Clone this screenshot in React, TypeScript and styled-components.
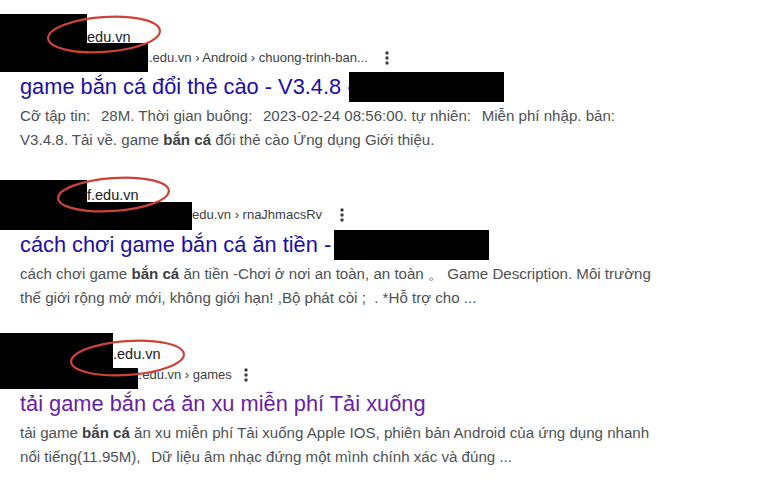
import React from "react";
import styled, { createGlobalStyle } from "styled-components";

const Global = createGlobalStyle`
  html, body { margin: 0; padding: 0; background: #ffffff; }
  body { font-family: "Liberation Sans", Arial, sans-serif; }
`;

const Page = styled.main`
  width: 768px;
  height: 483px;
  overflow: hidden;
  padding-top: 14px;
  box-sizing: border-box;
  background: #fff;
`;

const Result = styled.section<{ $top: number }>`
  position: relative;
  margin-top: ${(p) => p.$top}px;
`;

const SiteRow = styled.div`
  display: flex;
  align-items: flex-end;
`;

const Redact = styled.div<{ $w: number; $h: number; $ml?: number }>`
  width: ${(p) => p.$w}px;
  height: ${(p) => p.$h}px;
  margin-left: ${(p) => p.$ml ?? 0}px;
  background: #000;
  flex-shrink: 0;
  position: relative;
  z-index: 1;
`;

const Domain = styled.span<{ $lift: number }>`
  font-size: 14.5px;
  line-height: 16px;
  color: #202124;
  margin-bottom: ${(p) => p.$lift}px;
  white-space: nowrap;
`;

const CrumbRow = styled.div`
  display: flex;
  align-items: center;
`;

const Crumb = styled.span<{ $up: number; $indent: number }>`
  font-size: 13px;
  line-height: 16px;
  color: #3c4043;
  white-space: nowrap;
  margin-left: ${(p) => p.$indent}px;
  margin-top: ${(p) => -p.$up}px;
`;

const DotsWrap = styled.span<{ $gap: number; $up: number }>`
  display: inline-flex;
  margin-left: ${(p) => p.$gap}px;
  margin-top: ${(p) => -p.$up}px;
`;

const TitleRow = styled.div`
  display: flex;
  align-items: center;
  height: 30px;
  padding-left: 20px;
`;

const Title = styled.a<{ $visited?: boolean }>`
  font-size: 21.8px;
  line-height: 30px;
  color: ${(p) => (p.$visited ? "#681da8" : "#1a0dab")};
  text-decoration: none;
  white-space: nowrap;
`;

const Snippet = styled.p`
  margin: 2px 0 0 20px;
  font-size: 15.1px;
  line-height: 24px;
  color: #4d5156;
  white-space: nowrap;

  b {
    font-weight: bold;
    color: #3c4043;
  }
`;

const Ring = styled.svg<{ $x: number; $y: number }>`
  position: absolute;
  left: ${(p) => p.$x}px;
  top: ${(p) => p.$y}px;
  overflow: visible;
  z-index: 2;
  pointer-events: none;
`;

const FW = ":\u2002\u2009";

function Dots({ gap, up = 0 }: { gap: number; up?: number }) {
  return (
    <DotsWrap $gap={gap} $up={up}>
      <svg width="4" height="14" viewBox="0 0 4 14">
        <circle cx="2" cy="2" r="1.7" fill="#3c4043" />
        <circle cx="2" cy="7" r="1.7" fill="#3c4043" />
        <circle cx="2" cy="12" r="1.7" fill="#3c4043" />
      </svg>
    </DotsWrap>
  );
}

function Circle({ x, y, w, h }: { x: number; y: number; w: number; h: number }) {
  const cx = w / 2;
  const cy = h / 2;
  return (
    <Ring $x={x} $y={y} width={w} height={h} viewBox={`0 0 ${w} ${h}`}>
      <ellipse
        cx={cx}
        cy={cy}
        rx={cx - 1}
        ry={cy - 1}
        fill="none"
        stroke="#cf4238"
        strokeWidth="2.2"
        transform={`rotate(-4 ${cx} ${cy})`}
      />
    </Ring>
  );
}

export default function App() {
  return (
    <>
      <Global />
      <Page>
        <Result $top={0}>
          <SiteRow>
            <Redact $w={87} $h={29} />
            <Domain $lift={-2}>edu.vn</Domain>
          </SiteRow>
          <CrumbRow>
            <Redact $w={148} $h={29} />
            <Crumb $up={0} $indent={-2}>i.edu.vn › Android › chuong-trinh-ban...</Crumb>
            <Dots gap={17} />
          </CrumbRow>
          <TitleRow>
            <Title href="#">game bắn cá đổi thẻ cào - V3.4.8 -</Title>
            <Redact $w={155} $h={30} $ml={-5} />
          </TitleRow>
          <Snippet>
            Cỡ tập tin{FW}28M. Thời gian buông{FW}2023-02-24 08:56:00. tự nhiên{FW}Miễn phí nhập. bản{FW}
            <br />
            V3.4.8. Tải về. game <b>bắn cá</b> đổi thẻ cào Ứng dụng Giới thiệu.
          </Snippet>
          <Circle x={47} y={2} w={114} h={37} />
        </Result>

        <Result $top={28}>
          <SiteRow>
            <Redact $w={87} $h={22} />
            <Domain $lift={-1}>f.edu.vn</Domain>
          </SiteRow>
          <CrumbRow>
            <Redact $w={192} $h={28} />
            <Crumb $up={2} $indent={0}>edu.vn › rnaJhmacsRv</Crumb>
            <Dots gap={18} up={2} />
          </CrumbRow>
          <TitleRow>
            <Title href="#">cách chơi game bắn cá ăn tiền -</Title>
            <Redact $w={155} $h={30} $ml={3} />
          </TitleRow>
          <Snippet>
            cách chơi game <b>bắn cá</b> ăn tiền -Chơi ở nơi an toàn, an toàn 。 Game Description. Môi trường
            <br />
            thế giới rộng mở mới, không giới hạn! ,Bộ phát còi ; &nbsp;. *Hỗ trợ cho ...
          </Snippet>
          <Circle x={57} y={-3} w={113} h={35} />
        </Result>

        <Result $top={23}>
          <SiteRow>
            <Redact $w={113} $h={35} />
            <Domain $lift={6}>.edu.vn</Domain>
          </SiteRow>
          <CrumbRow>
            <Redact $w={138} $h={21} />
            <Crumb $up={7} $indent={-3}>t.edu.vn › games</Crumb>
            <Dots gap={12} up={7} />
          </CrumbRow>
          <TitleRow>
            <Title href="#" $visited>tải game bắn cá ăn xu miễn phí Tải xuống</Title>
          </TitleRow>
          <Snippet>
            tải game <b>bắn cá</b> ăn xu miễn phí Tải xuống Apple IOS, phiên bản Android của ứng dụng nhanh
            <br />
            nổi tiếng(11.95M),{"\u2002\u2009"}Dữ liệu âm nhạc đứng một mình chính xác và đúng ...
          </Snippet>
          <Circle x={70} y={7} w={115} h={36} />
        </Result>
      </Page>
    </>
  );
}
